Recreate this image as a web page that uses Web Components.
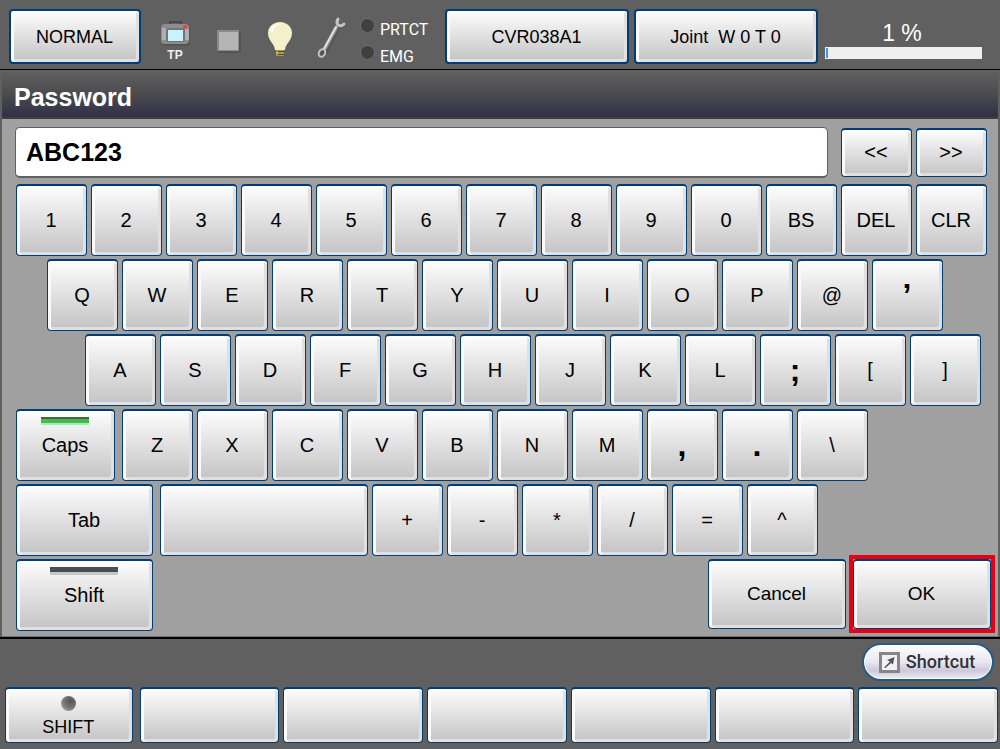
<!DOCTYPE html>
<html lang="en">
<head>
<meta charset="utf-8">
<title>Password</title>
<style>
html, body { margin: 0; min-height: 100%; background: #606060; }
body { font-family: "Liberation Sans", Arial, sans-serif; color: #000; }
</style>
</head>
<body>
<pendant-screen></pendant-screen>

<template id="button-tpl">
<style>
:host { display: block; flex: var(--w, 71) 0 0; min-width: 0; height: var(--h, 72px); box-sizing: border-box; }
:host([framed]) { outline: 4px solid #e60012; outline-offset: 0; }
:host([apart]) { margin-right: 3px; }
button {
  display: flex; flex-direction: column; align-items: center; justify-content: center; position: relative;
  box-sizing: border-box; width: 100%; height: 100%; margin: 0; padding: 0 1px 2px 0;
  border: 1px solid #003c78; border-top-width: 2px; border-radius: 4px;
  background: linear-gradient(#fdfdfd, #c3c3c3);
  box-shadow: inset 3px 0 #fafafa, inset 0 2px #fff, inset -3px -3px #e0e0e0;
  font: var(--font, 20px/24px "Liberation Sans", Arial, sans-serif); color: #000; white-space: pre;
}
:host([heavy]) button { border-width: 2px; padding-bottom: 0; }
:host([mark]) button { font: bold 32px/36px "Liberation Sans", Arial, sans-serif; }
i { display: none; }
:host([lamp]) i { display: block; position: absolute; top: 6px; width: 50%; height: 8px; background: linear-gradient(#484f52 0 5px, #c4c7c8 5px); }
:host([lamp="on"]) i { background: linear-gradient(#44624a 0 2px, #50b450 2px 6px, #96f5af 6px); }
</style>
<button type="button"><i></i><slot></slot></button>
</template>

<template id="row-tpl">
<style>
:host { display: flex; align-items: center; gap: 4px; }
:host([wide]) { margin-right: -4px; align-items: flex-start; }
::slotted(span) { flex: var(--w) 0 0; }
</style>
<slot></slot>
</template>

<template id="status-tpl">
<style>
:host { display: flex; flex: none; width: 296px; padding-left: 8px; height: 55px; }
svg { flex: none; display: block; }
text { font: bold 12px "Liberation Sans", Arial, sans-serif; fill: #eee; }
ul { list-style: none; margin: 0; padding: 7px 0 0 3px; }
li { display: flex; align-items: center; gap: 5px; height: 27px; font: 16px/27px Roboto, sans-serif; color: #fff; }
li::before { content: ""; box-sizing: border-box; width: 15px; height: 15px; border-radius: 50%; background: #404040; border: 1px solid #707070; margin-top: -8px; }
</style>
<svg width="52" height="55" viewBox="149 9 52 55">
  <path d="M170 25v-3h11v3" fill="none" stroke="#484848" stroke-width="2"/>
  <rect x="162" y="26" width="28" height="20" rx="4" fill="#454545" opacity=".5"/>
  <rect x="161" y="24" width="28" height="20" rx="4" fill="#8d8d8d"/>
  <path d="M162 28h4v12h-4zM185 29h4v11h-4z" fill="#b0b0b0"/>
  <rect x="166" y="28" width="19" height="14" rx="2" fill="#6d7678"/>
  <rect x="168" y="30" width="15" height="11" fill="#c9f2fb"/>
  <circle cx="185" cy="27" r="2" fill="#ef4038"/>
  <text x="175" y="59" text-anchor="middle">TP</text>
</svg>
<svg width="52" height="55" viewBox="201 9 52 55">
  <rect x="217" y="31" width="24" height="22" rx="2" fill="#484848" opacity=".5"/>
  <rect x="217" y="30" width="22" height="21" fill="#8b8b8b"/>
  <rect x="219" y="32" width="19" height="18" fill="#b5b5b5"/>
</svg>
<svg width="52" height="55" viewBox="253 9 52 55">
  <path d="M269 35c1 7 6 8 7 15h9c0-7 6-9 7-16z" fill="#444" opacity=".45"/>
  <path d="M280 22c-7 0-12 5-12 11 0 8 7 11 7 17h10c0-6 7-9 7-17 0-6-5-11-12-11z" fill="#f5efca"/>
  <path d="M270 31c1-5 5-7 10-7-5 2-7 4-7 9z" fill="#fff"/>
  <rect x="276" y="50" width="8" height="6" rx="1" fill="#a99d4c"/>
  <path d="M276 51.500h8M276 54.500h8" stroke="#544d1d"/>
  <path d="M277 51v4" stroke="#e8dd96"/>
</svg>
<svg width="52" height="55" viewBox="305 9 52 55">
  <g stroke-linecap="round" fill="none">
    <path d="M325 52l12-23" stroke="#444" stroke-width="5" opacity=".4"/>
    <path d="M324 50l12-22" stroke="#8f8f8f" stroke-width="4"/>
    <path d="M324 49l12-22" stroke="#e0e0e0" stroke-width="2"/>
    <path d="M338 19q-2 4 0 6 3 2 6-1" stroke="#c4c4c4" stroke-width="3"/>
    <ellipse cx="322" cy="53" rx="3" ry="4" transform="rotate(30 322 53)" stroke="#c4c4c4" stroke-width="2" fill="#555"/>
  </g>
</svg>
<ul><li>PRTCT</li><li>EMG</li></ul>
</template>

<template id="speed-tpl">
<style>
:host { display: flex; flex-direction: column; flex: 157 0 0; min-width: 0; margin-left: 7px; }
label { font-size: 23px; line-height: 26px; padding: 11px 3px 1px 0; text-align: center; color: #fff; }
.track { height: 12px; background: #efefef; padding: 1px; box-sizing: border-box; }
.fill { width: 2px; height: 10px; background: #3c96f5; }
</style>
<label id="v">1 %</label>
<div class="track" role="progressbar" aria-labelledby="v" aria-valuenow="1"><div class="fill"></div></div>
</template>

<template id="shortcut-tpl">
<style>
:host { display: block; }
button {
  display: flex; align-items: center; justify-content: center; gap: 6px; box-sizing: border-box; width: 132px; height: 38px;
  padding: 0 2px 0 0; border: 2px solid #245a87; border-radius: 19px; background: linear-gradient(#fdfdff, #e9e7f1 50%, #cdc8dc 75%, #eeedf5);
  box-shadow: inset 0 0 0 1px #fff; font: 500 18px/24px Roboto, sans-serif; color: #333;
}
</style>
<button type="button">
<svg width="21" height="21" viewBox="0 0 21 21"><rect x="1.500" y="1.500" width="18" height="18" fill="#f2f2f5" stroke="#868686" stroke-width="3"/><path d="M5 15.500L11 9.500 8 8 15.500 5 14 12.500 12 11 6.500 16z" fill="#555"/></svg>
<span>Shortcut</span>
</button>
</template>

<template id="screen-tpl">
<style>
:host { display: block; background: #606060; }
header { display: flex; padding: 9px 18px 5px 9px; border-bottom: 1px solid #000; }
header pendant-button { --h: 55px; }
.normal { --w: 132; --font: 18px/24px "Liberation Sans", Arial, sans-serif; }
.head { --w: 184; --font: 18px/24px "Liberation Sans", Arial, sans-serif; }
.head + .head { margin-left: 5px; }
main { border: solid #606060; border-width: 0 2px; }
h1 { margin: 0; padding: 8px 12px 0; font-size: 25px; line-height: 39px; color: #fff; background: linear-gradient(#606060, #4e4e50 45%, #303048); border-bottom: 2px solid #404040; }
form { display: flex; flex-direction: column; gap: 3px; background: #a0a0a0; padding: 8px 11px 5px 14px; border-bottom: 1px solid #707070; }
.entry { margin: 0 0 3px -1px; --h: 49px; }
input { flex: 811 0 0; min-width: 0; box-sizing: border-box; height: 51px; margin: 0 9px 0 0; padding: 0; text-indent: 10px; border: 1px solid #606060; border-bottom-width: 2px; border-radius: 5px; background: #fff; font: bold 25px/30px "Liberation Sans", Arial, sans-serif; color: #000; outline: 0; }
.caps { --w: 99; } .tab { --w: 137; } .space { --w: 208; }
.end { --w: 138; --h: 70px; --font: 19px/24px "Liberation Sans", Arial, sans-serif; }
footer { border-top: 2px solid #000; padding: 4px 2px 5px 5px; }
.short { display: flex; justify-content: flex-end; margin: 0 4px 6px 0; }
.soft { display: flex; gap: 4px; --w: 140; --h: 56px; }
.shift { --w: 128; --font: 18px/20px "Liberation Sans", Arial, sans-serif; }
.dot { width: 15px; height: 15px; margin: 3px 0 6px; border-radius: 50%; background: radial-gradient(circle at 65% 35%, #555, #777 50%, #999 75%, #666); }
</style>
<header>
  <pendant-button class="normal" heavy>NORMAL</pendant-button>
  <status-icons></status-icons>
  <pendant-button class="head" heavy>CVR038A1</pendant-button>
  <pendant-button class="head" heavy>Joint  W 0 T 0</pendant-button>
  <speed-meter></speed-meter>
</header>
<main>
  <h1 id="title">Password</h1>
  <form>
    <key-row class="entry"><input type="text" value="ABC123" aria-labelledby="title"><pendant-button>&lt;&lt;</pendant-button><pendant-button>&gt;&gt;</pendant-button></key-row>
    <key-row keys="1 2 3 4 5 6 7 8 9 0 BS DEL CLR"></key-row>
    <key-row keys="Q W E R T Y U I O P @ ’" before="27" after="40"></key-row>
    <key-row keys="A S D F G H J K L ; [ ]" before="65" after="2"></key-row>
    <key-row keys="Z X C V B N M , . \" after="115"><pendant-button class="caps" lamp="on" apart>Caps</pendant-button></key-row>
    <key-row keys="+ - * / = ^" after="165"><pendant-button class="tab" apart>Tab</pendant-button><pendant-button class="space" name="Space"></pendant-button></key-row>
    <key-row wide><pendant-button class="tab" lamp="off">Shift</pendant-button><span style="--w:547"></span><pendant-button class="end" apart>Cancel</pendant-button><pendant-button class="end" framed>OK</pendant-button></key-row>
  </form>
</main>
<footer>
  <div class="short"><shortcut-button></shortcut-button></div>
  <div class="soft">
    <pendant-button class="shift" apart><div class="dot"></div>SHIFT</pendant-button>
    <pendant-button name="F1"></pendant-button><pendant-button name="F2"></pendant-button><pendant-button name="F3"></pendant-button>
    <pendant-button name="F4"></pendant-button><pendant-button name="F5"></pendant-button><pendant-button name="F6"></pendant-button>
  </div>
</footer>
</template>

<script>
class Base extends HTMLElement {
  constructor() {
    super();
    const tpl = document.getElementById(this.constructor.tpl);
    this.attachShadow({ mode: "open" }).append(document.importNode(tpl.content, true));
  }
}
class PendantButton extends Base {
  static tpl = "button-tpl";
  connectedCallback() {
    const name = this.getAttribute("name");
    if (name) this.shadowRoot.querySelector("button").setAttribute("aria-label", name);
  }
}
class KeyRow extends Base {
  static tpl = "row-tpl";
  connectedCallback() {
    if (this.built) return;
    this.built = true;
    const spacer = (w) => {
      const s = document.createElement("span");
      s.style.setProperty("--w", w);
      return s;
    };
    if (this.hasAttribute("before")) this.append(spacer(this.getAttribute("before")));
    for (const k of (this.getAttribute("keys") || "").split(" ").filter(Boolean)) {
      const b = document.createElement("pendant-button");
      b.textContent = k;
      b.toggleAttribute("mark", "’;,.".includes(k));
      this.append(b);
    }
    if (this.hasAttribute("after")) this.append(spacer(this.getAttribute("after")));
  }
}
class StatusIcons extends Base { static tpl = "status-tpl"; }
class SpeedMeter extends Base { static tpl = "speed-tpl"; }
class ShortcutButton extends Base { static tpl = "shortcut-tpl"; }
class PendantScreen extends Base { static tpl = "screen-tpl"; }
customElements.define("pendant-button", PendantButton);
customElements.define("key-row", KeyRow);
customElements.define("status-icons", StatusIcons);
customElements.define("speed-meter", SpeedMeter);
customElements.define("shortcut-button", ShortcutButton);
customElements.define("pendant-screen", PendantScreen);
</script>
</body>
</html>
